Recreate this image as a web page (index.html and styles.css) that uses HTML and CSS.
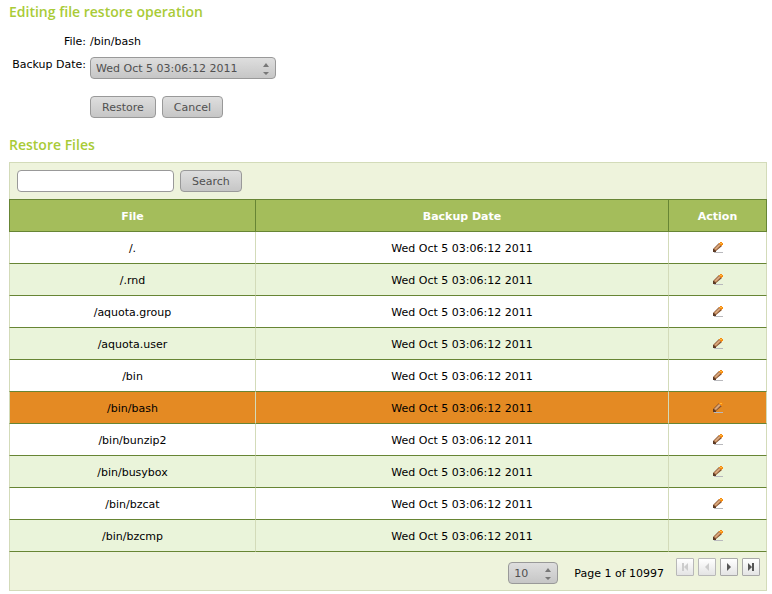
FILE: index.html
```
<!DOCTYPE html>
<html lang="en">
<head>
    <meta charset="UTF-8">
    <meta name="viewport" content="width=device-width, initial-scale=1.0">
    <title>Restore Files</title>
    <link rel="stylesheet" href="styles.css">
</head>
<body>
    <!-- pencil and arrows, reused below -->
    <svg class="sprites" width="0" height="0" aria-hidden="true">
        <symbol id="pencil" viewBox="0 0 10 11">
            <path d="M1 10h9v1H1z" fill="#b9b9bd"/>
            <path d="M0 9V7l6-6 3 3-6 5z" fill="#85502c"/>
            <path d="M1 7l5-5 2 1-5 5z" fill="#d9a67a"/>
            <path d="M0 7h1v1h1v1h1v1H0z" fill="#5a3a26"/>
            <path d="M6 1h1V0h2v1h1v2H9v1H8V3H7V2H6z" fill="#f58a10"/>
            <path d="M7 1h2v1H7z" fill="#ffb840"/>
        </symbol>
        <symbol id="updown" viewBox="0 0 8 12">
            <path d="M1 4l3-4 3 4zM1 9l3 3 3-3z" fill="#777"/>
        </symbol>
    </svg>

    <h2>Editing file restore operation</h2>
    <form class="edit-form">
        <span class="label">File:</span>
        <span class="value">/bin/bash</span>
        <label class="label" for="backup-date">Backup Date:</label>
        <div class="select date-select">
            <select id="backup-date"><option>Wed Oct 5 03:06:12 2011</option></select>
            <svg width="8" height="12"><use href="#updown"/></svg>
        </div>
        <div class="buttons">
            <button type="submit" class="btn">Restore</button>
            <button type="button" class="btn">Cancel</button>
        </div>
    </form>

    <h2>Restore Files</h2>
    <div class="panel">
        <form class="search">
            <input type="text" aria-label="Search files">
            <button type="submit" class="btn">Search</button>
        </form>
        <table>
            <thead>
                <tr><th class="col-file">File</th><th>Backup Date</th><th class="col-action">Action</th></tr>
            </thead>
            <tbody>
                <tr><td>/.</td><td>Wed Oct 5 03:06:12 2011</td><td><a href="#" aria-label="Edit"><svg width="10" height="11"><use href="#pencil"/></svg></a></td></tr>
                <tr><td>/.rnd</td><td>Wed Oct 5 03:06:12 2011</td><td><a href="#" aria-label="Edit"><svg width="10" height="11"><use href="#pencil"/></svg></a></td></tr>
                <tr><td>/aquota.group</td><td>Wed Oct 5 03:06:12 2011</td><td><a href="#" aria-label="Edit"><svg width="10" height="11"><use href="#pencil"/></svg></a></td></tr>
                <tr><td>/aquota.user</td><td>Wed Oct 5 03:06:12 2011</td><td><a href="#" aria-label="Edit"><svg width="10" height="11"><use href="#pencil"/></svg></a></td></tr>
                <tr><td>/bin</td><td>Wed Oct 5 03:06:12 2011</td><td><a href="#" aria-label="Edit"><svg width="10" height="11"><use href="#pencil"/></svg></a></td></tr>
                <tr class="selected"><td>/bin/bash</td><td>Wed Oct 5 03:06:12 2011</td><td><a href="#" aria-label="Edit"><svg width="10" height="11"><use href="#pencil"/></svg></a></td></tr>
                <tr><td>/bin/bunzip2</td><td>Wed Oct 5 03:06:12 2011</td><td><a href="#" aria-label="Edit"><svg width="10" height="11"><use href="#pencil"/></svg></a></td></tr>
                <tr><td>/bin/busybox</td><td>Wed Oct 5 03:06:12 2011</td><td><a href="#" aria-label="Edit"><svg width="10" height="11"><use href="#pencil"/></svg></a></td></tr>
                <tr><td>/bin/bzcat</td><td>Wed Oct 5 03:06:12 2011</td><td><a href="#" aria-label="Edit"><svg width="10" height="11"><use href="#pencil"/></svg></a></td></tr>
                <tr><td>/bin/bzcmp</td><td>Wed Oct 5 03:06:12 2011</td><td><a href="#" aria-label="Edit"><svg width="10" height="11"><use href="#pencil"/></svg></a></td></tr>
            </tbody>
        </table>
        <div class="pager">
            <div class="select size-select">
                <select aria-label="Rows per page"><option>10</option></select>
                <svg width="8" height="12"><use href="#updown"/></svg>
            </div>
            <span class="page">Page 1 of 10997</span>
            <div class="pages">
                <button type="button" disabled aria-label="First page"><svg width="8" height="8"><path d="M1 0h2v8H1zM7 0v8L3 4z"/></svg></button>
                <button type="button" disabled aria-label="Previous page"><svg width="8" height="8"><path d="M6 0v8L2 4z"/></svg></button>
                <button type="button" aria-label="Next page"><svg width="8" height="8"><path d="M2 0v8l4-4z"/></svg></button>
                <button type="button" aria-label="Last page"><svg width="8" height="8"><path d="M1 0v8l4-4zM5 0h2v8H5z"/></svg></button>
            </div>
        </div>
    </div>
</body>
</html>
```
FILE: styles.css
```
* { box-sizing: border-box; }
body { margin: 0 5px 0 9px; background: #fff; color: #000; font-family: "DejaVu Sans", Verdana, sans-serif; font-size: 11px; line-height: 14px; }
.sprites { position: absolute; }
svg { display: block; }
h2 { margin: 0; padding-top: 2px; color: #a9cb37; font-family: "Trebuchet MS", "Open Sans", sans-serif; font-size: 14px; font-weight: 600; line-height: 20px; }

/* controls */
input, select, .btn { height: 22px; border: 1px solid #999; border-radius: 4px; font: inherit; }
select, .btn { background: linear-gradient(#dedede, #c6c6c6); color: #505050; }
select { width: 100%; padding: 1px 5px 0; appearance: none; }
.btn { padding: 1px 11px 0; }
.select { position: relative; }
.select svg { position: absolute; right: 6px; top: 6px; pointer-events: none; }

/* edit form */
.edit-form { display: grid; grid-template-columns: 77px 1fr; column-gap: 4px; padding: 12px 0 15px; }
.label, .value { padding-top: 1px; }
.label { text-align: right; white-space: nowrap; }
.edit-form .value, .edit-form span.label { height: 23px; }
.date-select { width: 186px; }
.buttons { grid-column: 2; display: flex; gap: 6px; margin-top: 17px; }

/* file list */
.panel { margin-top: 7px; border: 1px solid #d3dbb9; background: #eef3dc; }
.search { display: flex; gap: 6px; padding: 7px; }
.search input { width: 157px; background: #fff; }
table { width: calc(100% + 2px); margin: 0 -1px; border-collapse: separate; border-spacing: 0; table-layout: fixed; }
th, td { padding: 2px 0 0; text-align: center; }
th { height: 33px; background: #a4bd5b; color: #fff; border: 1px solid #678534; border-right: 0; }
td { height: 32px; background: #fff; border-left: 1px solid #d3dbb9; border-bottom: 1px solid #678534; }
th:last-child { border-right: 1px solid #678534; }
td:last-child { padding-top: 0; border-right: 1px solid #d3dbb9; }
.col-file { width: 246px; }
.col-action { width: 99px; }
tr:nth-child(even) td { background: #eaf4da; }
tr.selected td { background: #e48a23; }
td svg { margin: 0 auto; }
.pager { display: flex; justify-content: flex-end; height: 38px; padding: 6px 6px 0 0; }
.size-select { width: 50px; margin-top: 4px; }
.page { margin: 9px 12px 0 16px; }
.pages { display: flex; gap: 4px; }
.pages button { display: flex; align-items: center; justify-content: center; width: 18px; height: 18px; padding: 0; border: 1px solid #a8a8a8; border-radius: 1px; background: linear-gradient(#fff, #e4e4e4); fill: #555; }
.pages button:disabled { border-color: #b8b8b8; fill: #ccc; }
```
